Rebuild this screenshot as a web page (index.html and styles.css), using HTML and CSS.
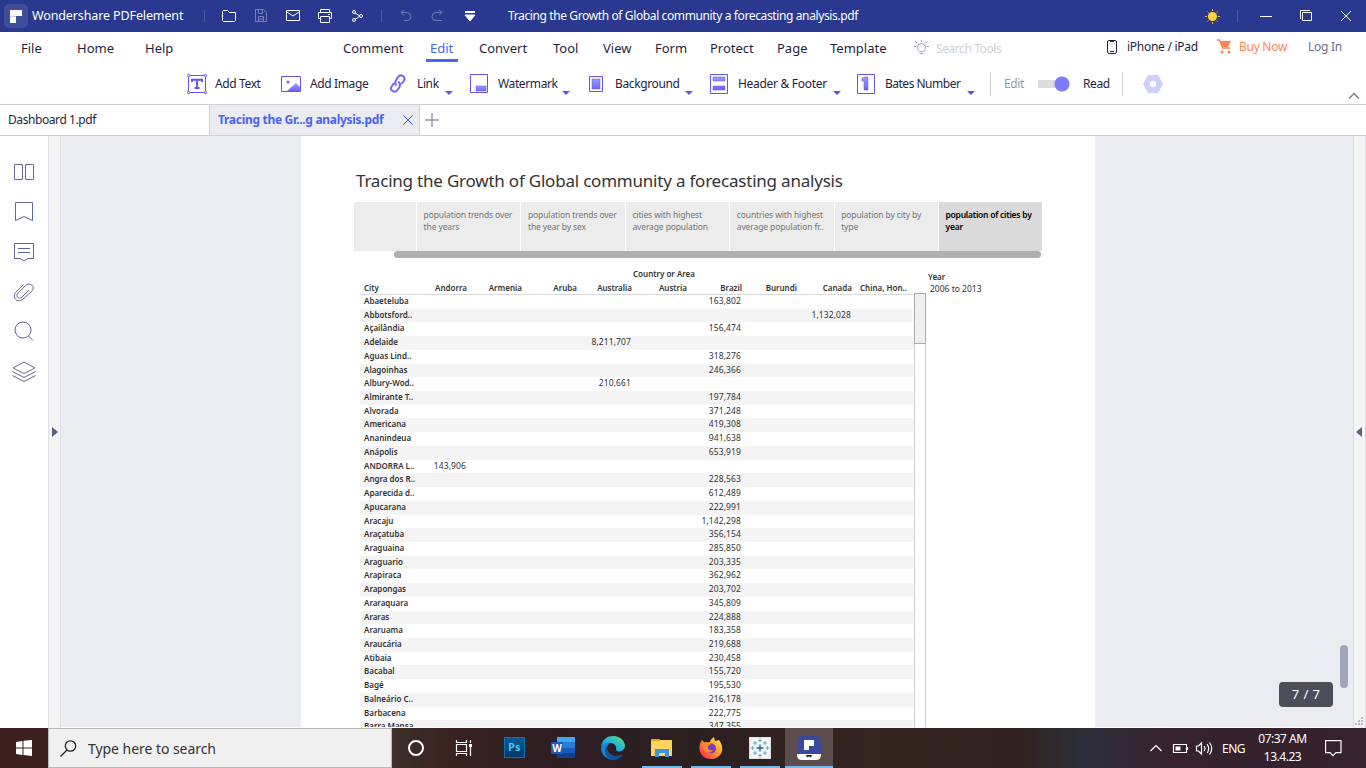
FILE: index.html
```html
<!DOCTYPE html>
<html lang="en">
<head>
<meta charset="utf-8">
<title>Wondershare PDFelement</title>
<link rel="stylesheet" href="styles.css">
</head>
<body>
<svg width="0" height="0" class="defs"><defs>
<linearGradient id="g" x2="0" y2="1"><stop stop-color="#92a2fb"/><stop offset="1" stop-color="#7662f8"/></linearGradient>
<linearGradient id="edge" x1="0" y1="1" x2="1" y2="0"><stop stop-color="#1683d3"/><stop offset=".5" stop-color="#21b5dc"/><stop offset="1" stop-color="#69e36b"/></linearGradient>
<linearGradient id="fire" x1="1" y1="0" x2="0" y2="1"><stop stop-color="#fff35a"/><stop offset=".45" stop-color="#ff9a22"/><stop offset="1" stop-color="#f5165a"/></linearGradient>
</defs></svg>

<header class="titlebar">
  <svg class="logo" width="24" height="24" viewBox="0 0 24 24"><rect width="24" height="24" rx="5" fill="#404c9c"/><path d="M6 6h12v6h-6v7H6z" fill="#fff"/><path d="M6 12h6v1H6z" fill="#cbd0e8"/></svg>
  <span class="appname">Wondershare PDFelement</span>
  <svg class="quick" width="276" height="32" viewBox="204 0 276 32" fill="none" stroke="#fff">
    <path d="M204.5 10v12M381.500 10v12" stroke="#515d9f"/>
    <path d="M222.500 20.500v-9l1-1h4l2 2h6v8l-1 1h-11z"/>
    <path d="M255.500 9.500h8l3 3v9h-11zM258.500 9.500v4h4v-4M258.500 21.500v-5h5v5M259 19h4" stroke="#7780b9"/>
    <path d="M286.500 10.500h13v10h-13zM287 12l6 4 6-4"/>
    <path d="M320.500 12.500v-3h9v3M320.500 18.500h-2v-6h13v6h-2M320.500 16.500h9v6h-9zM328 14.500h2"/>
    <g><circle cx="354" cy="12" r="1.500"/><circle cx="354" cy="20" r="1.500"/><circle cx="361" cy="16" r="1.500"/><path d="M355 13l5 3-5 3.500"/></g>
    <path d="M404 10l-3 2.500 3 3M401 12.500h6q4 0 4 4t-4 4h-3M439 10l3 2.500-3 3M442 12.500h-6q-4 0-4 4t4 4h6" stroke="#707ab4"/>
    <path d="M465 15h10l-5 6z" fill="#fff"/><path d="M465 12h10" stroke-width="2"/>
  </svg>
  <span class="doctitle">Tracing the Growth of Global community a forecasting analysis.pdf</span>
  <svg class="winctl" width="166" height="32" viewBox="1200 0 166 32" fill="none" stroke="#fff">
    <circle cx="1212.500" cy="16.500" r="4.500" fill="#ffd33c" stroke="none"/>
    <path d="M1212.500 9v2M1212.500 22v2M1205 16.500h2M1218 16.500h2M1207.500 11.500l1 1M1216.500 20.500l1 1M1217.500 11.500l-1 1M1207.500 21.500l1-1" stroke="#e6bd57"/>
    <path d="M1237.500 10v12" stroke="#515d9f"/><path d="M1260 16.500h12M1302.500 12.500h9v8h-9v-8zM1300.500 19v-8.500h9.500M1341 11l10 10M1351 11l-10 10"/>
  </svg>
</header>

<nav class="menu">
  <span>File</span><span>Home</span><span>Help</span><span>Comment</span><span class="on">Edit</span><span>Convert</span><span>Tool</span><span>View</span><span>Form</span><span>Protect</span><span>Page</span><span>Template</span>
  <svg width="16" height="16" viewBox="0 0 16 16" fill="none" stroke="#9ba2c5"><path d="M5.500 11.500q-2-1.500-2-4a4 4 0 0 1 8 0q0 2.500-2 4zM5.500 13.500h4M7.500 0v2M0 6.500h2M13 6.500h2M1.500 1.500l2 2M13.500 1.500l-2 2"/></svg>
  <span class="search">Search Tools</span>
  <svg class="up" width="12" height="16" viewBox="0 0 12 16" fill="none" stroke="#22224a"><rect x=".5" y="1.500" width="9" height="13" rx="1.500"/><path d="M3 2.500h4M3 12.500h4"/></svg>
  <span class="small">iPhone / iPad</span>
  <svg class="up" width="15" height="15" viewBox="0 0 15 15"><path d="M0 1h2.500l3.200 8H13" fill="none" stroke="#ff8350" stroke-width="1.500"/><path d="M3 2h11l-3 6H5z" fill="#ff8350"/><circle cx="5" cy="13" r="1.500" fill="#ff8350"/><circle cx="12" cy="13" r="1.500" fill="#ff8350"/></svg>
  <span class="small buy">Buy Now</span><span class="small login">Log In</span>
</nav>

<div class="tools">
  <svg width="21" height="22" viewBox="1 0 21 22" fill="none" stroke="#6950f0"><path d="M2.500 2.500h17v17h-17z"/><path d="M6 9V6.800h10V9M11 6.800v8.200M8.500 15h5" stroke-width="1.900"/><g fill="#fff"><circle cx="2.500" cy="2.500" r="1.200"/><circle cx="19.500" cy="2.500" r="1.200"/><circle cx="2.500" cy="19.500" r="1.200"/><circle cx="19.500" cy="19.500" r="1.200"/></g></svg><span>Add Text</span>
  <svg width="21" height="22" viewBox="0 0 21 22"><path d="M.5 3.500h19v15H.5z" fill="none" stroke="#6950f0"/><path d="M6 18l9-8 4 4v4z" fill="url(#g)"/><circle cx="7" cy="9" r="1.500" fill="#7662f8"/></svg><span>Add Image</span>
  <svg width="17" height="22" viewBox="0 0 17 22" fill="none" stroke="#7762f5" stroke-width="2"><path d="M6.500 12.500c-2-1.800-1.500-4 0-6L8 4c2.500-3.500 8-.5 6 3.500L11.500 11M8 8.500c2.500 1.500 2.500 4 1 6.200L7.500 17c-2.500 3.500-8 .5-6-3.300L4 10"/></svg><span>Link</span><i class="caret"></i>
  <svg width="19" height="22" viewBox="0 0 19 22"><path d="M.5 1.500h17v18H.5z" fill="none" stroke="#6950f0"/><rect x="6" y="13" width="10" height="5" fill="url(#g)" stroke="#6950f0" stroke-width=".5"/></svg><span>Watermark</span><i class="caret"></i>
  <svg width="15" height="22" viewBox="0 0 15 22"><path d="M.5 3.500h13v15H.5z" fill="none" stroke="#6950f0"/><rect x="3" y="6" width="8" height="10" fill="url(#g)" stroke="#6950f0" stroke-width=".5"/></svg><span>Background</span><i class="caret"></i>
  <svg width="19" height="22" viewBox="0 0 19 22"><path d="M.5 1.500h17v19H.5z" fill="none" stroke="#6950f0"/><path d="M3 4h12v4H3zM3 13h12v4H3z" fill="url(#g)" stroke="#6950f0" stroke-width=".5"/></svg><span class="hf">Header &amp; Footer</span><i class="caret"></i>
  <svg width="19" height="22" viewBox="0 0 19 22"><path d="M.5 1.500h17v19H.5z" fill="none" stroke="#6950f0"/><path d="M5 5l3-1h3v13H7V8H5z" fill="url(#g)" stroke="#6950f0" stroke-width=".5"/></svg><span class="bates">Bates Number</span><i class="caret"></i>
  <i class="sep"></i><span class="dim">Edit</span><i class="toggle"></i><span>Read</span><i class="sep"></i>
  <svg width="21" height="22" viewBox="0 0 21 22"><path d="M5 2h10l5 9-5 9H5L0 11z" fill="#cdcffd"/><circle cx="10" cy="11" r="3.200" fill="#fff"/></svg>
  <svg class="fold" width="12" height="8" viewBox="0 0 12 8" fill="none" stroke="#777b95" stroke-width="1.400"><path d="M1 6.500l5-5 5 5"/></svg>
</div>

<div class="tabs">
  <div class="tab">Dashboard 1.pdf</div>
  <div class="tab active"><span>Tracing the Gr...g analysis.pdf</span><svg width="12" height="12" viewBox="0 0 12 12" stroke="#4864f6"><path d="M1 1l10 10M11 1L1 11"/></svg></div>
  <svg class="plus" width="14" height="14" viewBox="0 0 14 14" stroke="#9b9eb5" stroke-width="1.600"><path d="M0 7h14M7 0v14"/></svg>
</div>

<main class="work">
  <aside class="side">
    <svg width="48" height="260" viewBox="0 140 48 260" fill="none" stroke="#62678f">
      <rect x="14.500" y="164.500" width="8" height="15" rx=".5"/><rect x="25.500" y="164.500" width="8" height="15" rx=".5"/>
      <path d="M15.500 202.500h17v18l-8.500-4-8.500 4z"/>
      <path d="M14.500 243.500h19v15h-5.500l-4 2.500-4-2.500h-5.500zM18 248.500h12M18 252.500h12"/>
      <path d="M23.500 284.500l-8 8c-4 5 2 11 7 7l9-8c5-5-2-10-6-6l-7.500 7.500c-3 3 1 7 4 4l7-7"/>
      <circle cx="23" cy="330" r="8"/><path d="M28.500 336l4.500 4.500"/>
      <path d="M24 362l11 6-11 5.500-11-5.500zM12.500 371.500l11.500 6 11.500-6M12.500 375.500l11.500 6 11.500-6"/>
    </svg>
  </aside>
  <div class="gutter"><i class="open"></i></div>
  <section class="canvas">
    <article class="page">
      <h1>Tracing the Growth of Global community a forecasting analysis</h1>
      <div class="story"><div></div><div>population trends over<br>the years</div><div>population trends over<br>the year by sex</div><div>cities with highest<br>average population</div><div>countries with highest<br>average population fr..</div><div>population by city by<br>type</div><div class="sel">population of cities by<br>year</div></div>
      <div class="hbar"></div>
      <div class="viz">
        <div class="sheet">
          <div class="axis">Country or Area</div>
          <div class="row head"><b>City</b><b>Andorra</b><b>Armenia</b><b>Aruba</b><b>Australia</b><b>Austria</b><b>Brazil</b><b>Burundi</b><b>Canada</b><b>China, Hon..</b></div>
          <div class="rows">
<div class="row"><b>Abaeteluba</b><span>163,802</span></div>
<div class="row"><b>Abbotsford..</b><span class="ca">1,132,028</span></div>
<div class="row"><b>Açailândia</b><span>156,474</span></div>
<div class="row"><b>Adelaide</b><span class="au">8,211,707</span></div>
<div class="row"><b>Aguas Lind..</b><span>318,276</span></div>
<div class="row"><b>Alagoinhas</b><span>246,366</span></div>
<div class="row"><b>Albury-Wod..</b><span class="au">210,661</span></div>
<div class="row"><b>Almirante T..</b><span>197,784</span></div>
<div class="row"><b>Alvorada</b><span>371,248</span></div>
<div class="row"><b>Americana</b><span>419,308</span></div>
<div class="row"><b>Ananindeua</b><span>941,638</span></div>
<div class="row"><b>Anápolis</b><span>653,919</span></div>
<div class="row"><b>ANDORRA L..</b><span class="an">143,906</span></div>
<div class="row"><b>Angra dos R..</b><span>228,563</span></div>
<div class="row"><b>Aparecida d..</b><span>612,489</span></div>
<div class="row"><b>Apucarana</b><span>222,991</span></div>
<div class="row"><b>Aracaju</b><span>1,142,298</span></div>
<div class="row"><b>Araçatuba</b><span>356,154</span></div>
<div class="row"><b>Araguaina</b><span>285,850</span></div>
<div class="row"><b>Araguario</b><span>203,335</span></div>
<div class="row"><b>Arapiraca</b><span>362,962</span></div>
<div class="row"><b>Arapongas</b><span>203,702</span></div>
<div class="row"><b>Araraquara</b><span>345,809</span></div>
<div class="row"><b>Araras</b><span>224,888</span></div>
<div class="row"><b>Araruama</b><span>183,358</span></div>
<div class="row"><b>Araucária</b><span>219,688</span></div>
<div class="row"><b>Atibaia</b><span>230,458</span></div>
<div class="row"><b>Bacabal</b><span>155,720</span></div>
<div class="row"><b>Bagé</b><span>195,530</span></div>
<div class="row"><b>Balneário C..</b><span>216,178</span></div>
<div class="row"><b>Barbacena</b><span>222,775</span></div>
<div class="row"><b>Barra Mansa</b><span>347,355</span></div>
          </div>
        </div>
        <div class="vbar"><i></i></div>
        <div class="filter"><b>Year</b><span>2006 to 2013</span></div>
      </div>
    </article>
    <div class="scroll"></div>
    <div class="pageno">7 / 7</div>
  </section>
  <div class="gutter right"><i class="open"></i><svg class="grip" width="9" height="9" viewBox="0 0 9 9" fill="#bbb"><path d="M6 0h2v2H6zM3 3h2v2H3zM6 3h2v2H6zM0 6h2v2H0zM3 6h2v2H3zM6 6h2v2H6z"/></svg></div>
</main>

<footer class="taskbar">
  <div class="start"><svg width="16" height="16" viewBox="0 0 16 16" fill="#fff"><path d="M0 2l6.500-1v6.500H0zM7.500.8L16 0v7.500H7.500zM0 8.500h6.500V15L0 14zM7.500 8.500H16V16l-8.500-1z"/></svg></div>
  <div class="find"><svg width="17" height="17" viewBox="0 0 17 17" fill="none" stroke="#222" stroke-width="1.300"><circle cx="10.500" cy="6" r="5.200"/><path d="M7 10l-6.500 6.500"/></svg><span>Type here to search</span></div>
  <div class="app"><svg width="18" height="18" viewBox="0 0 18 18" fill="none" stroke="#fff" stroke-width="2"><circle cx="9" cy="9" r="7"/></svg></div>
  <div class="app view"><svg width="18" height="18" viewBox="0 0 18 18" fill="none" stroke="#fff" stroke-width="1.200"><path d="M1.500 1v2.500h10V1M1.500 17v-2.500h10V17M1.500 5.500h10v7h-10zM15.500 1v3M15.500 8v9"/><path d="M14 5h3v3h-3z" fill="#fff" stroke="none"/></svg></div>
  <div class="app ps"><span>Ps</span></div>
  <div class="app"><svg width="26" height="24" viewBox="0 0 26 24"><path d="M7 1h18v6H7z" fill="#42a5f0"/><path d="M7 6h18v6H7z" fill="#2b7cd3"/><path d="M7 12h18v5H7z" fill="#185abd"/><path d="M7 17h18v5H7z" fill="#103f91"/><path d="M1 6h12v12H1z" fill="#1d58bf"/><text x="2.300" y="15.500" font-family="Noto Sans" font-weight="700" font-size="10" fill="#fff">W</text></svg></div>
  <div class="app"><svg width="24" height="24" viewBox="0 0 24 24"><path d="M0 11C1 3 7 0 12 0c8 0 12 6 12 10 0 5-7 7-9 4 1-3-1-7-5-7-5 0-8 2-10 4z" fill="url(#edge)"/><path d="M0 12C1 8 5 6 9 7c-3 2-4 6-2 9s8 6 14 3c-7 9-21 4-21-7z" fill="#1683d3"/><path d="M9 7c-4 3-4 8-1 11 3 2 9 3 14 0-2 4-8 7-13 5C3 20 2 11 9 7z" fill="#0d539f"/></svg></div>
  <div class="app run"><svg width="22" height="22" viewBox="0 0 22 22"><path d="M0 2h8l1 1h12v16H0z" fill="#ffd35c"/><path d="M0 2h8l1 2H0z" fill="#e6a012"/><path d="M4 20v-8h14v8h-4v-4H8v4z" fill="#3a95df"/></svg></div>
  <div class="app run"><svg width="24" height="24" viewBox="0 0 24 24"><path d="M3 4l3 3 5-1c0-2 2-4 4-5l1 4 4-1c7 9 2 19-8 19C2 23-3 13 3 4z" fill="url(#fire)"/><circle cx="12" cy="12.500" r="5" fill="#743ec9"/><path d="M4 7c3-2 6-1 8 1l-3 2c-1 3 1 5 5 4-3 4-8 3-10-1z" fill="#ff8b24"/></svg></div>
  <div class="app run"><svg width="22" height="22" viewBox="0 0 22 22" fill="none" stroke="#1d6597"><path d="M0 0h22v22H0z" fill="#f3f4f5" stroke="#ccc"/><path d="M11 7.500v7M7.500 11h7" stroke-width="1.300"/><path d="M11 1.500v4M9 3.500h4M11 16.500v4M9 18.500h4M3.500 9v4M1.500 11h4M18.500 9v4M16.500 11h4M6 4v4M4 6h4M16 4v4M14 6h4M6 14v4M4 16h4M16 14v4M14 16h4" stroke="#6eacc9"/></svg></div>
  <div class="app run current"><svg width="24" height="24" viewBox="0 0 24 24"><rect width="24" height="24" rx="5" fill="#3a499e"/><path d="M0 18h24v1q0 5-5 5H5q-5 0-5-5z" fill="#fff"/><path d="M7 4h10v6h-5v4H7z" fill="#fff"/><path d="M9 19h6l-1 2.500-2-1-2 1z" fill="#222"/></svg></div>
  <div class="tray">
    <svg width="66" height="20" viewBox="0 0 66 20" fill="none" stroke="#fff" stroke-width="1.200"><path d="M2.500 13L8 7.500l5.500 5.500M25.500 6.500h13v8h-13zM39.500 9v3"/><path d="M27.500 8.500h5v4h-5z" fill="#fff" stroke="none"/><path d="M48.500 8h2l3-3v11l-3-3h-2zM56 8q2 2.500 0 5M59 6q3.500 4.500 0 9M61.500 4.500q4.500 6 0 12"/></svg>
    <span class="lang">ENG</span><span class="clock"><span>07:37 AM</span><span>13.4.23</span></span>
    <svg class="note" width="17" height="17" viewBox="0 0 17 17" fill="none" stroke="#fff" stroke-width="1.200"><path d="M.6.600h15.400v12h-5l-3 3-3-3h-4.400z"/></svg>
  </div>
</footer>
</body>
</html>
```
FILE: styles.css
```css
* { box-sizing: border-box; }
body { margin: 0; width: 1366px; height: 768px; overflow: hidden; display: flex; flex-direction: column; background: #fff; font-family: "Noto Sans", "Open Sans", sans-serif; color: #1f1f42; white-space: nowrap; }
svg { display: block; flex: none; }
i { display: block; }
.defs { position: absolute; }

.titlebar { height: 32px; flex: none; display: flex; align-items: center; background: #2a388f; color: #fff; padding-left: 4px; }
.appname { width: 172px; padding: 0 0 1px 4px; font-size: 12.5px; letter-spacing: -0.12px; }
.quick { margin-left: 4px; }
.doctitle { margin-left: 28px; width: 692px; padding-bottom: 1px; font-size: 12px; letter-spacing: -0.38px; }

.menu { height: 32px; flex: none; display: grid; align-items: center; font-size: 13px; grid-template-columns: 56px 68px 198px 87px 49px 74px 50px 52px 55px 67px 53px 84px 22px 171px 20px 90px 22px 69px 58px; padding-left: 21px; }
.menu .on { color: #4864f6; }
.menu .on::after { content: ""; display: block; width: 32px; height: 3px; margin: 2px 0 -5px -4px; background: #4864f6; }
.menu .search { font-size: 12px; letter-spacing: -0.42px; color: #d0d0d4; }
.menu .small { font-size: 12px; letter-spacing: -0.28px; padding-bottom: 3px; }
.menu .up { margin-bottom: 3px; }
.menu .buy { color: #ff8350; }
.menu .login { color: #6b6d83; }

.tools { height: 41px; flex: none; display: grid; align-items: center; grid-template-columns: 28px 66px 29px 80px 27px 28px 25px 28px 64px 27px 26px 70px 25px 28px 95px 24px 28px 82px 23px 14px 34px 45px 39px 21px 205px 12px; padding-left: 187px; border-bottom: 1px solid #cfcfdc; font-size: 12px; letter-spacing: -0.38px; }
.tools span { padding-bottom: 1px; }
.tools .hf { letter-spacing: -0.3px; }
.tools .bates { letter-spacing: -0.5px; }
.tools .dim { color: #999; }
.caret { width: 8px; height: 4px; margin-top: 18px; background: #6950f0; clip-path: polygon(0 0, 100% 0, 50% 100%); }
.sep { width: 1px; height: 24px; background: #cfcfdc; }
.toggle { width: 32px; height: 16px; background: radial-gradient(circle at 24px 8px, #7c7cf9 7px, transparent 8px), linear-gradient(#dcdcdc, #dcdcdc) 0 4px / 24px 8px no-repeat; border-radius: 4px 8px 8px 4px; }
.fold { margin-top: 23px; }

.tabs { height: 31px; flex: none; display: flex; align-items: center; border-bottom: 1px solid #cfcfdc; font-size: 12px; }
.tab { width: 209px; padding: 0 0 1px 8px; letter-spacing: -0.42px; }
.tab.active { width: 211px; height: 30px; display: flex; align-items: center; justify-content: space-between; padding-right: 5px; background: #ebecf1; border: solid #cfcfdc; border-width: 0 1px; color: #4864f6; font-weight: 700; letter-spacing: -0.3px; }
.plus { margin-left: 5px; }

.work { height: 592px; flex: none; display: flex; }
.side { width: 48px; padding-top: 4px; }
.gutter { width: 13px; flex: none; background: #f4f4f4; border: solid #dedee2; border-width: 0 1px; padding: 291px 0 0 3px; }
.open { width: 6px; height: 10px; background: #5a5f88; clip-path: polygon(0 0, 100% 50%, 0 100%); }
.gutter.right { padding-left: 2px; position: relative; }
.right .open { clip-path: polygon(100% 0, 0 50%, 100% 100%); }
.grip { position: absolute; right: 1px; bottom: 2px; }
.canvas { position: relative; width: 1292px; height: 591px; overflow: hidden; background: #ebecf1; padding-left: 240px; }
.page { width: 794px; height: 591px; overflow: hidden; background: #fff; padding: 32px 53px 0; color: #333; }
h1 { margin: 0 0 8px 2px; height: 26px; line-height: 26px; font-size: 17px; font-weight: 400; letter-spacing: -0.21px; }
.story { display: grid; gap: 1px; grid-template-columns: 62px repeat(5, 103.4px) 103px; height: 49px; font-size: 8.5px; line-height: 12px; letter-spacing: -0.12px; color: #757575; }
.story div { background: #ececec; padding: 7px 0 0 6.6px; }
.story .sel { background: #dadada; color: #000; font-weight: 600; letter-spacing: -0.25px; }
.hbar { height: 7px; width: 647px; margin-left: 40px; border-radius: 4px; background: #b0b0b0; }
.viz { display: flex; margin-left: 6px; font-size: 8px; }
.sheet { width: 554px; padding-top: 9px; }
.axis { height: 14px; line-height: 13px; padding-left: 273px; font-weight: 600; }
b { font-weight: 600; }
.row { display: grid; grid-template-columns: 55px repeat(9, 55px); height: 13.73px; line-height: 12.6px; padding-left: 4px; margin-right: 1px; }
.row span { grid-column: 7; text-align: right; padding-right: 8px; font-size: 8.5px; letter-spacing: 0.1px; }
.row .ca { grid-column: 9; } .row .au { grid-column: 5; } .row .an { grid-column: 2; }
.row.head { height: 14px; line-height: 14px; border-bottom: 1px solid #d9d9d9; }
.head b + b { text-align: right; padding-right: 7px; }
.rows .row:nth-child(even) { background: #f4f4f4; }
.vbar { width: 12px; height: 500px; margin-top: 35px; border: solid #ccc; border-width: 0 1px; }
.vbar i { height: 51px; background: #f0f0f0; border: 1px solid #aaa; margin: 0 -1px; }
.filter { padding: 13px 0 0 2px; line-height: 12px; display: flex; flex-direction: column; }
.filter span { padding-left: 2px; font-size: 8.5px; }
.scroll { position: absolute; left: 1279px; top: 509px; width: 8px; height: 43px; border-radius: 4px; background: #a3a6b6; }
.pageno { position: absolute; left: 1218px; top: 546px; width: 54px; height: 25px; line-height: 25px; border-radius: 4px; background: #4b4d58; color: #fff; text-align: center; font-size: 13px; letter-spacing: 0.4px; }

.taskbar { height: 40px; flex: none; display: flex; color: #fff; background: linear-gradient(90deg, #3c201d 0, #3b1f1d 48px, #3c3029 392px, #39221f 450px, #2d1e24 560px, #2b2020 700px, #352521 870px, #30221f 1020px, #2d2f3b 1085px, #35222e 1170px, #35212f 1366px); }
.start { width: 48px; padding: 12px 16px; }
.find { width: 344px; display: flex; align-items: center; gap: 11px; padding-left: 11px; background: #f1f1f1; border: 1px solid #bbb; color: #333; font-size: 14px; letter-spacing: -0.05px; }
.app { width: 48px; margin-right: 1.15px; display: grid; place-items: center; }
.app.view { padding-right: 2px; }
.app.run { border-bottom: 2px solid #76b9ed; width: 40px; margin: 0 5.15px 0 4px; padding-top: 1px; }
.app.run.current { width: 48px; margin: 0 0 0 -.5px; background: #5c4e4d; }
.ps span { width: 21px; height: 21px; line-height: 18px; margin-bottom: 1px; border: 1px solid #0875b0; background: linear-gradient(#095c94, #003665); color: #3fc9fa; font-size: 11px; font-weight: 700; text-align: center; }
.tray { margin-left: auto; width: 218px; display: flex; align-items: center; font-size: 12px; }
.lang { margin-left: 8px; width: 29px; letter-spacing: -0.5px; }
.clock { display: flex; flex-direction: column; align-items: center; width: 61px; margin-left: 1px; line-height: 18px; letter-spacing: -0.5px; }
.note { margin-left: 12px; }
```
